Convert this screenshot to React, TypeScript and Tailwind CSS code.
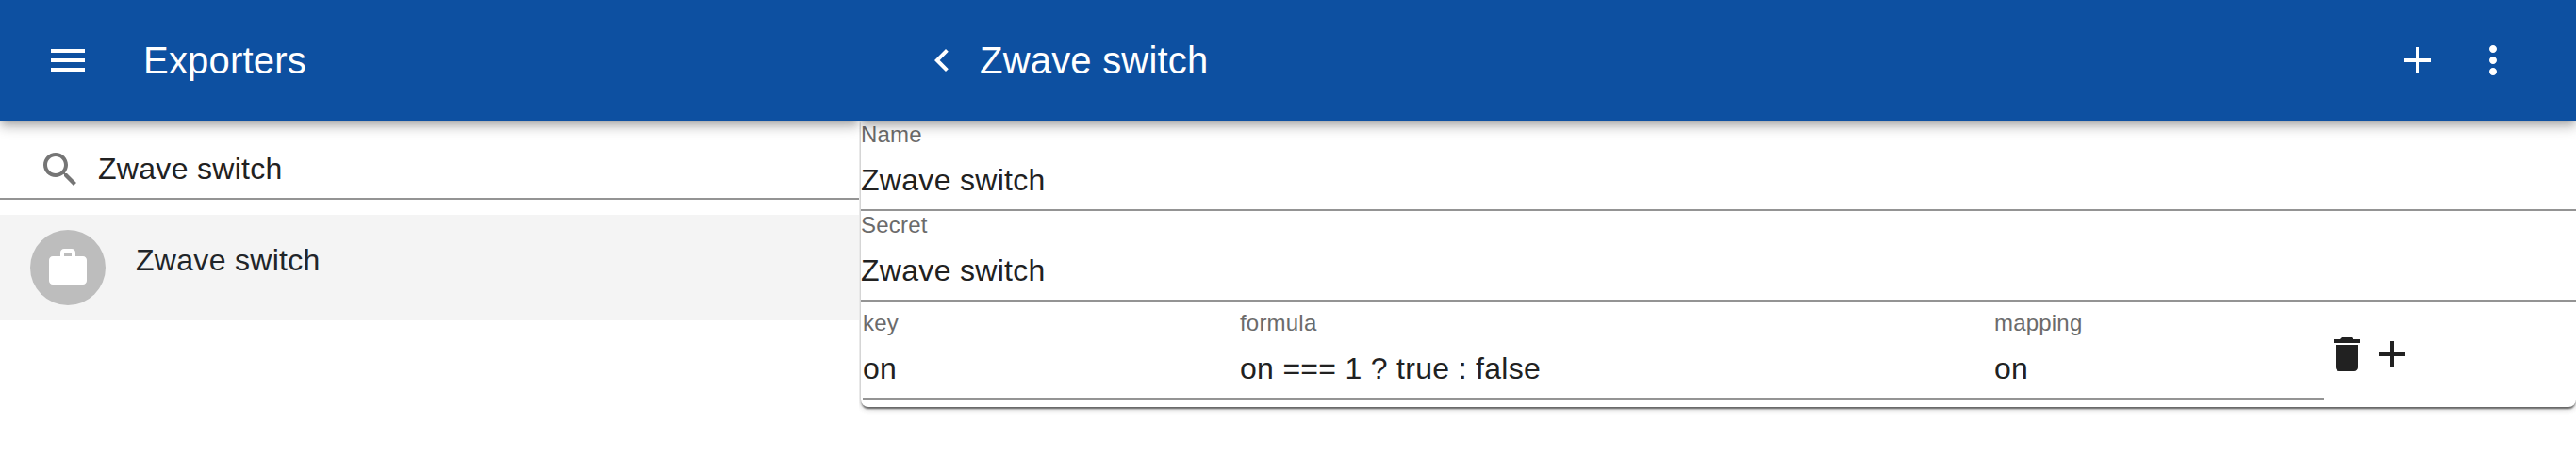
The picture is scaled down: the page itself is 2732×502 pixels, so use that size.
import React from "react";

const paths = {
  menu: "M3 18h18v-2H3v2zm0-5h18v-2H3v2zm0-7v2h18V6H3z",
  back: "M15.41 7.41L14 6l-6 6 6 6 1.41-1.41L10.83 12z",
  add: "M19 13h-6v6h-2v-6H5v-2h6V5h2v6h6v2z",
  more: "M12 8c1.1 0 2-.9 2-2s-.9-2-2-2-2 .9-2 2 .9 2 2 2zm0 2c-1.1 0-2 .9-2 2s.9 2 2 2 2-.9 2-2-.9-2-2-2zm0 6c-1.1 0-2 .9-2 2s.9 2 2 2 2-.9 2-2-.9-2-2-2z",
  search:
    "M15.5 14h-.79l-.28-.27C15.41 12.59 16 11.11 16 9.5 16 5.91 13.09 3 9.5 3S3 5.91 3 9.5 5.91 16 9.5 16c1.61 0 3.09-.59 4.23-1.57l.27.28v.79l5 4.99L20.49 19l-4.99-5zm-6 0C7.01 14 5 11.99 5 9.5S7.01 5 9.5 5 14 7.01 14 9.5 11.99 14 9.5 14z",
  work: "M20 6h-4V4c0-1.11-.89-2-2-2h-4c-1.11 0-2 .89-2 2v2H4c-1.11 0-1.99.89-1.99 2L2 19c0 1.11.89 2 2 2h16c1.11 0 2-.89 2-2V8c0-1.11-.89-2-2-2zm-6 0h-4V4h4v2z",
  trash: "M6 19c0 1.1.9 2 2 2h8c1.1 0 2-.9 2-2V7H6v12zM19 4h-3.5l-1-1h-5l-1 1H5v2h14V4z",
};

function Icon({ name, className = "" }: { name: keyof typeof paths; className?: string }) {
  return (
    <svg viewBox="0 0 24 24" fill="currentColor" className={`size-12 shrink-0 ${className}`}>
      <path d={paths[name]} />
    </svg>
  );
}

function Field({ label, value, className = "" }: { label: string; value: string; className?: string }) {
  return (
    <div className={`h-24 border-b-2 border-[#949494] ${className}`}>
      <div className="h-8 text-[24px] leading-[30px] tracking-[0.2px] text-[#6b6b6b]">{label}</div>
      <div className="pt-[11px] text-[32px] leading-[40px] tracking-[0.3px] text-[#212121]">{value}</div>
    </div>
  );
}

// The clip keeps each bar's shadow below the bar and off its neighbour.
const barShadow =
  "shadow-[0_4px_8px_-2px_rgba(0,0,0,0.2),0_8px_10px_0_rgba(0,0,0,0.14),0_2px_20px_0_rgba(0,0,0,0.12)] [clip-path:inset(0_0_-40px_0)]";

const cardShadow =
  "shadow-[0_4px_2px_-2px_rgba(0,0,0,0.2),0_2px_2px_0_rgba(0,0,0,0.14),0_2px_6px_0_rgba(0,0,0,0.12),0_4px_2px_-2px_rgba(0,0,0,0.2),0_2px_2px_0_rgba(0,0,0,0.14),0_2px_6px_0_rgba(0,0,0,0.12)] [clip-path:inset(0_0_-20px_-2px)]";

export default function App() {
  return (
    <div className="flex h-[502px] w-[2732px] overflow-hidden bg-white font-['Liberation_Sans',Arial,sans-serif]">
      <section className="w-[911px] shrink-0">
        <header className={`relative z-10 flex h-32 items-center bg-[#0d50a1] pl-12 text-white ${barShadow}`}>
          <Icon name="menu" />
          <h1 className="pl-14 text-[40px] leading-[56px] tracking-[0.2px]">Exporters</h1>
        </header>
        <div className="flex h-[84px] items-center border-b-2 border-[#949494] pt-[22px] pl-10">
          <Icon name="search" className="text-[#757575]" />
          <span className="pb-[2px] pl-4 text-[32px] leading-[40px] tracking-[0.3px] text-[#212121]">Zwave switch</span>
        </div>
        <div className="mt-4 flex h-28 items-center bg-[#f4f4f4] pl-8">
          <div className="flex size-20 items-center justify-center rounded-full bg-[#bdbdbd] text-white">
            <Icon name="work" />
          </div>
          <span className="pb-4 pl-8 text-[32px] leading-[40px] tracking-[0.3px] text-[#212529]">Zwave switch</span>
        </div>
      </section>

      <main className="min-w-0 flex-1">
        <header className={`relative z-10 flex h-32 items-center bg-[#0d50a1] pr-10 pl-16 text-white ${barShadow}`}>
          <Icon name="back" />
          <h2 className="pl-4 text-[40px] leading-[56px] tracking-[0.2px]">Zwave switch</h2>
          <div className="ml-auto flex gap-8 pr-6">
            <Icon name="add" />
            <Icon name="more" />
          </div>
        </header>
        <div className={`ml-[2px] h-[304px] rounded-b-lg bg-white ${cardShadow}`}>
          <Field label="Name" value="Zwave switch" />
          <Field label="Secret" value="Zwave switch" />
          <div className="flex pt-2 pl-[2px]">
            <Field label="key" value="on" className="w-[400px]" />
            <Field label="formula" value="on === 1 ? true : false" className="w-[800px]" />
            <Field label="mapping" value="on" className="w-[350px]" />
            <div className="flex pt-6 text-[#212121]">
              <Icon name="trash" />
              <Icon name="add" />
            </div>
          </div>
        </div>
      </main>
    </div>
  );
}
